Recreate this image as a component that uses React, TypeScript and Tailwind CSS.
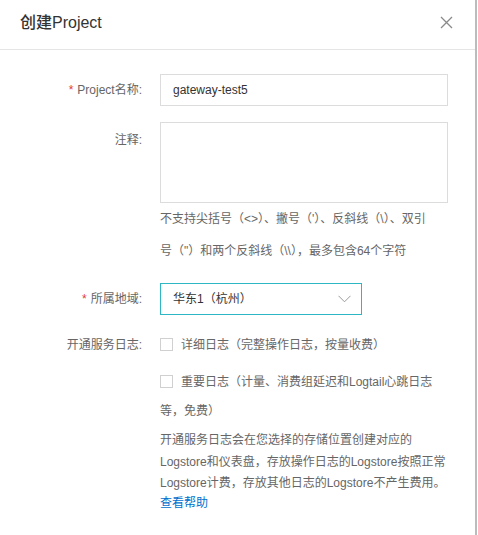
import React from "react";

const font = { fontFamily: '"Liberation Sans", "Noto Sans CJK SC", sans-serif' };

function Label({ children, required }: { children: React.ReactNode; required?: boolean }) {
  return (
    <div className="w-[144px] shrink-0 text-right text-[12px] text-[#666] pr-[2px]">
      {required && <span className="text-[#e4393c] mr-[4px]">*</span>}
      {children}
    </div>
  );
}

function Box() {
  return (
    <span className="inline-block w-[13px] h-[13px] border border-[#d0d0d0] bg-white align-middle mr-[8px] -mt-[3px]" />
  );
}

export default function App() {
  return (
    <div className="w-[478px] h-[535px] bg-white flex" style={font}>
      <div className="w-[477px] h-full border-r-2 border-[#bcbcbc] flex flex-col">
        <div className="h-[50px] shrink-0 border-b border-[#e5e5e5] flex items-center justify-between pl-[20px] pr-[22px] pb-[4px]">
          <div className="text-[16px] text-[#333] font-medium">创建Project</div>
          <svg width="13" height="13" viewBox="0 0 13 13">
            <path d="M1 1L12 12M12 1L1 12" stroke="#8a8a8a" strokeWidth="1.3" fill="none" />
          </svg>
        </div>

        <div className="pt-[24px] flex flex-col">
          <div className="flex items-center">
            <Label required>Project名称:</Label>
            <div className="ml-[16px] w-[288px] h-[32px] border border-[#dcdcdc] flex items-center pl-[12px] text-[12px] text-[#333]">
              gateway-test5
            </div>
          </div>

          <div className="flex mt-[16px]">
            <div className="pt-[9px]">
              <Label>注释:</Label>
            </div>
            <div className="ml-[16px] w-[288px]">
              <div className="h-[81px] border border-[#dcdcdc]" />
              <div className="text-[12px] text-[#666] leading-[32px] whitespace-nowrap">
                不支持尖括号（&lt;&gt;）、撇号（'）、反斜线（\）、双引
                <br />
                号（"）和两个反斜线（\\），最多包含64个字符
              </div>
            </div>
          </div>

          <div className="flex items-center mt-[16px]">
            <Label required>所属地域:</Label>
            <div className="ml-[16px] w-[202px] h-[32px] border border-[#2db7c5] flex items-center justify-between pl-[12px] pr-[10px] text-[12px] text-[#333]">
              <span>华东1（杭州）</span>
              <svg width="13" height="8" viewBox="0 0 13 8">
                <path d="M0.5 0.8L6.5 6.8L12.5 0.8" stroke="#9a9a9a" strokeWidth="1" fill="none" />
              </svg>
            </div>
          </div>

          <div className="flex mt-[16px]">
            <div className="leading-[29px]">
              <Label>开通服务日志:</Label>
            </div>
            <div className="ml-[16px] w-[290px] text-[12px] text-[#666]">
              <div className="leading-[29px] whitespace-nowrap">
                <Box />
                详细日志（完整操作日志，按量收费）
              </div>
              <div className="leading-[29px] whitespace-nowrap mt-[8px]">
                <Box />
                重要日志（计量、消费组延迟和Logtail心跳日志
                <br />
                等，免费）
              </div>
              <div className="mt-[4px] leading-[21.5px] whitespace-nowrap text-[#666]">
                开通服务日志会在您选择的存储位置创建对应的
                <br />
                Logstore和仪表盘，存放操作日志的Logstore按照正常
                <br />
                Logstore计费，存放其他日志的Logstore不产生费用。
              </div>
              <div className="leading-[16px] text-[#0070cc]">查看帮助</div>
            </div>
          </div>
        </div>
      </div>
    </div>
  );
}
